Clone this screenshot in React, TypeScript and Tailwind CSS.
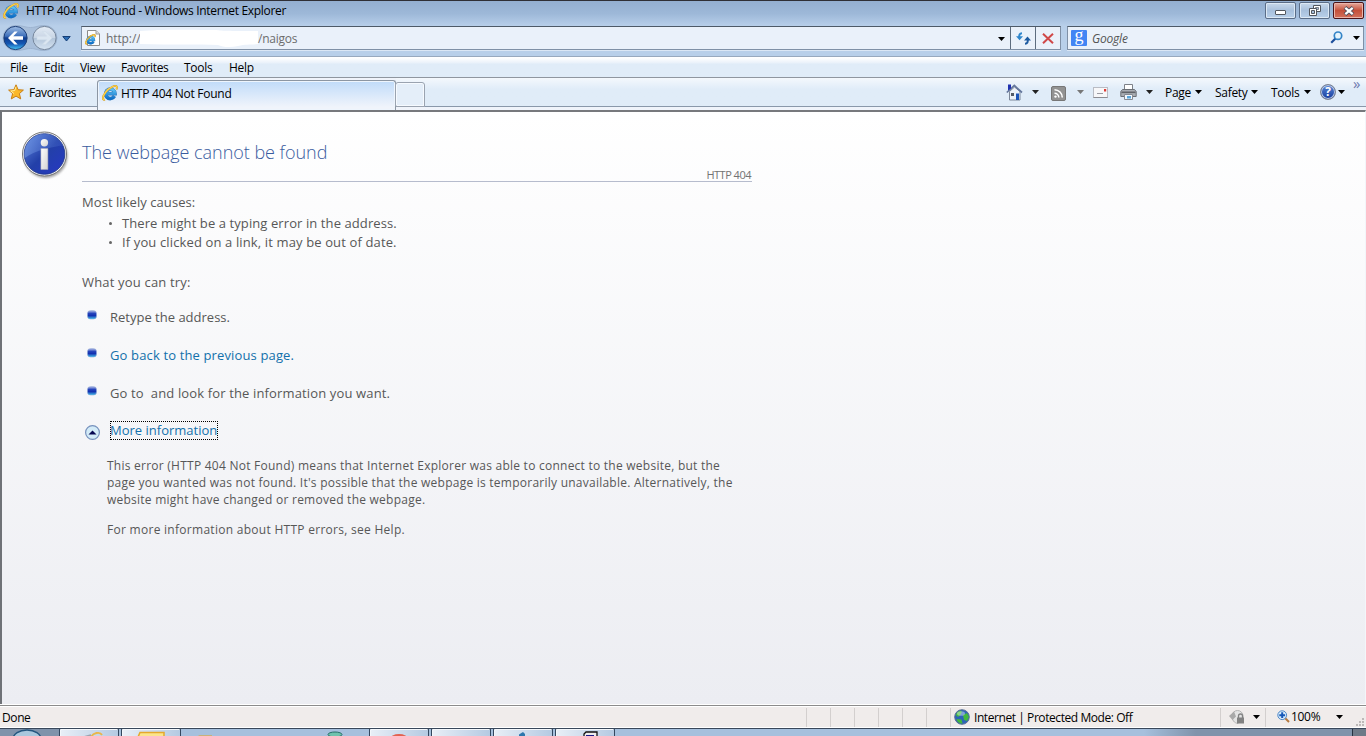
import React from 'react';

const IELogo = ({ size = 16 }: { size?: number }) => (
  <svg width={size} height={size} viewBox="0 0 16 16" className="shrink-0">
    <defs>
      <linearGradient id="ie" x1="0" y1="0" x2="0" y2="1">
        <stop offset="0" stopColor="#5cc3f5" />
        <stop offset="1" stopColor="#0f70c8" />
      </linearGradient>
    </defs>
    <path d="M12.4 11.2A4.700 4.700 0 1 1 13 8.700H5.2" fill="none" stroke="#2b74b6" strokeWidth="3.6" />
    <path d="M12.4 11.2A4.700 4.700 0 1 1 13 8.700H5.2" fill="none" stroke="url(#ie)" strokeWidth="2.8" />
    <path d="M3 14.6C-.2 15.4.6 11 3.8 7 7.2 2.8 13.400-.4 14.700 1.600c.5.9.2 1.800-.3 2.800" fill="none" stroke="#c08a1c" strokeWidth="1.900" />
    <path d="M3 14.6C-.2 15.4.6 11 3.8 7 7.2 2.8 13.400-.4 14.700 1.600c.5.9.2 1.800-.3 2.800" fill="none" stroke="#fbd04a" strokeWidth="1.400" />
  </svg>
);

const Caret = ({ className = '' }: { className?: string }) => (
  <svg width="7" height="4" viewBox="0 0 7 4" className={`shrink-0 ${className}`}>
    <path d="M0 0h7L3.5 4z" fill="currentColor" />
  </svg>
);

const NavButtons = () => (
  <svg width="62" height="28" viewBox="0 0 62 28" className="shrink-0">
    <defs>
      <linearGradient id="back" x1="0" y1="0" x2="0" y2="1">
        <stop offset="0" stopColor="#9fbde4" />
        <stop offset=".42" stopColor="#3e70bb" />
        <stop offset=".5" stopColor="#0f3c8d" />
        <stop offset=".75" stopColor="#1458b4" />
        <stop offset="1" stopColor="#49c6f5" />
      </linearGradient>
      <linearGradient id="fwd" x1="0" y1="0" x2="0" y2="1">
        <stop offset="0" stopColor="#e3ebf5" />
        <stop offset=".48" stopColor="#c9d6e5" />
        <stop offset=".52" stopColor="#b3c5da" />
        <stop offset="1" stopColor="#d7e5f3" />
      </linearGradient>
    </defs>
    <path d="M13.500 1.500c8 0 10 2 15 2s7-2 14-2a12.500 12.500 0 0 1 0 25c-7 0-9-2-14-2s-7 2-15 2a12.500 12.500 0 0 1 0-25z" fill="#a9bfda" stroke="#98afcc" strokeWidth=".8" />
    <circle cx="13.500" cy="14" r="11.600" fill="url(#back)" stroke="#1d3f78" />
    <path d="M6 14l6.500-6.500h3.200l-4.400 4.700H21v3.600h-9.700l4.400 4.700h-3.200z" fill="#fff" />
    <circle cx="42.500" cy="14" r="11.600" fill="url(#fwd)" stroke="#75869c" />
    <path d="M50 14l-6.500-6.500h-3.200l4.400 4.700H35v3.600h9.700l-4.400 4.700h3.200z" fill="#dbe6f1" stroke="#cfdbe8" strokeWidth=".6" />
  </svg>
);

const PageIcon = () => (
  <div className="relative h-4 w-4 shrink-0">
    <svg width="16" height="16" viewBox="0 0 16 16">
      <path d="M2.500.5h8.500l3.500 3.500v11.500h-12z" fill="#fdfdfd" stroke="#8c8c8c" />
      <path d="M11 .5V4h3.500" fill="#ddd" stroke="#9a9a9a" />
    </svg>
    <div className="absolute top-[4px] left-0"><IELogo size={11} /></div>
  </div>
);

const WindowButtons = () => (
  <div className="flex gap-[3px]">
    <div className="flex h-[17px] w-[31px] items-center justify-center rounded-[2px] border border-[#5b6d87] bg-linear-to-b from-[#c8d8ea] via-[#a8c0dc] to-[#b9d0ea] shadow-[inset_0_0_0_1px_#dce8f4]">
      <svg width="11" height="5" viewBox="0 0 11 5" className="mt-[4px]"><rect x=".5" y=".5" width="10" height="4" rx=".5" fill="#fff" stroke="#53575e" /></svg>
    </div>
    <div className="flex h-[17px] w-[31px] items-center justify-center rounded-[2px] border border-[#5b6d87] bg-linear-to-b from-[#c8d8ea] via-[#a8c0dc] to-[#b9d0ea] shadow-[inset_0_0_0_1px_#dce8f4]">
      <svg width="12" height="11" viewBox="0 0 12 11">
        <path d="M4.500.5h7v6h-7z" fill="#fff" stroke="#53575e" />
        <path d="M6.500 2.500h3v2h-3z" fill="#a8c0dc" stroke="#53575e" strokeWidth=".7" />
        <path d="M.5 3.500h7v7h-7z" fill="#fff" stroke="#53575e" />
        <path d="M2.500 5.500h3v3h-3z" fill="#a8c0dc" stroke="#53575e" />
      </svg>
    </div>
    <div className="flex h-[17px] w-[31px] items-center justify-center rounded-[2px] border border-[#4b1318] bg-linear-to-b from-[#e5a79b] via-[#c4503b] to-[#d2705c] shadow-[inset_0_0_0_1px_#e9b5ab]">
      <svg width="12" height="10" viewBox="0 0 12 10">
        <path d="M2 1.500l8 7M10 1.500l-8 7" stroke="#4e4e5c" strokeWidth="4" />
        <path d="M2.300 1.800l7.400 6.400M9.700 1.800L2.300 8.200" stroke="#fff" strokeWidth="2.200" />
      </svg>
    </div>
  </div>
);

const TitleBar = () => (
  <div className="flex h-[26px] items-start justify-between border-t border-[#2f2f35] bg-linear-to-b from-[#94afd0] via-[#9db8d8] to-[#b8cfea] pr-[2px] pl-[3px]">
    <div className="flex h-[20px] items-center gap-[7px]">
      <span className="-mt-px"><IELogo /></span>
      <span className="text-[12px] tracking-[-0.32px] text-black">HTTP 404 Not Found - Windows Internet Explorer</span>
    </div>
    <div className="mt-px"><WindowButtons /></div>
  </div>
);

const AddressBar = () => (
  <div className="flex h-[30px] bg-[#b8cfe9] pl-[2px]">
    <div className="-mt-[2px] flex h-[28px] w-[79px] items-center">
      <NavButtons />
      <svg width="9" height="6" viewBox="0 0 9 6" className="-ml-[2px] mt-[2px]"><path d="M.8.500h7.400L4.500 5z" fill="#2b6cb4" stroke="#163f77" /></svg>
    </div>
    <div className="flex h-[24px] w-[980px] border border-[#7f90a6] border-t-[#4e5a68] bg-[#eaf1fa] shadow-[0_1px_0_#dbe7f5]">
      <div className="flex flex-1 items-center pl-[3px]">
        <PageIcon />
        <span className="mt-[2px] ml-[5px] w-[34px] text-[12px] tracking-[-0.1px] text-[#6d6d6d]">http://</span>
        <svg width="118" height="19" viewBox="0 0 118 19" className="shrink-0">
          <path d="M0 2C20 0 60 1 77 1c3 1 20 1 41 1v13c-8 1-12 0-20 2-8 2-16 1-20-1-20-1-45 0-78-1z" fill="#fff" />
        </svg>
        <span className="mt-[2px] text-[12px] tracking-[-0.25px] text-[#6d6d6d]">/naigos</span>
        <Caret className="mt-px mr-[5px] ml-auto text-black" />
      </div>
      <div className="flex w-[25px] items-center justify-center border-l border-[#5d6c7e]">
        <svg width="15" height="13" viewBox="0 0 15 13">
          <path d="M6 1.200C3.500 1.200 3 3 3.200 6" fill="none" stroke="#2f86cc" strokeWidth="2" />
          <path d="M0 4.200h7L3.500 8.200z" fill="#2f86cc" />
          <path d="M9 11.800c2.500 0 3-1.800 2.800-4.800" fill="none" stroke="#1c5aa0" strokeWidth="2" />
          <path d="M8 8.600h7L11.500 4.500z" fill="#1c5aa0" />
        </svg>
      </div>
      <div className="flex w-[25px] items-center justify-center border-l border-[#5d6c7e]">
        <svg width="12" height="11" viewBox="0 0 12 11" className="mt-px"><path d="M1 .8l10 9.400M11 .8L1 10.200" stroke="#d04848" strokeWidth="2" /></svg>
      </div>
    </div>
    <div className="ml-[6px] flex h-[24px] w-[297px] items-center border border-[#7f90a6] border-t-[#4e5a68] bg-[#eaf1fa] pl-[3px] shadow-[0_1px_0_#dbe7f5]">
      <div className="flex h-4 w-4 items-center justify-center rounded-[1px] bg-[#4285f4]">
        <span className="mt-[-6px] font-['Liberation_Serif',serif] text-[18px] leading-none text-white">g</span>
      </div>
      <span className="mt-[2px] ml-[5px] text-[12px] tracking-[-0.2px] text-[#555] italic">Google</span>
      <svg width="13" height="13" viewBox="0 0 13 13" className="-mt-px ml-auto">
        <path d="M6 7L1.200 11.800" stroke="#1d4f9c" strokeWidth="2.200" />
        <circle cx="8" cy="4.700" r="3.700" fill="#e6f4fd" stroke="#3384c7" strokeWidth="1.700" />
      </svg>
      <Caret className="-mt-px mr-[3px] ml-[10px] text-black" />
    </div>
  </div>
);

const MenuBar = () => (
  <div className="flex h-[22px] items-center border-t border-b border-t-[#98a9be] border-b-[#8f969f] bg-linear-to-b from-white from-5% via-[#e9f1fa] via-30% to-[#e0ecf8] to-35% pt-[2px] pl-[10px] text-[12px] tracking-[-0.3px] text-black">
    <span className="w-[34px]">File</span>
    <span className="w-[36px]">Edit</span>
    <span className="w-[41px]">View</span>
    <span className="w-[63px] tracking-[-0.38px]">Favorites</span>
    <span className="w-[45px]">Tools</span>
    <span>Help</span>
  </div>
);

const HomeIcon = () => (
  <svg width="17" height="17" viewBox="0 0 17 17" className="shrink-0">
    <path d="M3.500 7.500L8.500 3l5.500 4.500v8.500h-10.500z" fill="#eef2f8" stroke="#7c8799" />
    <path d="M.8 8.500L8.300 1.500l7.700 7" fill="none" stroke="#65779c" strokeWidth="1.700" />
    <path d="M2 .5h3v4l-3 2z" fill="#1f31b0" />
    <path d="M5 9h3v3H5z" fill="#555b66" />
    <path d="M10 9.500h3v6.500h-3z" fill="#1d55b8" />
  </svg>
);

const RssIcon = () => (
  <svg width="15" height="15" viewBox="0 0 15 15" className="shrink-0">
    <rect x=".5" y=".5" width="14" height="14" rx="1.500" fill="#929292" stroke="#777" />
    <path d="M3.500 7.200a4.300 4.300 0 0 1 4.300 4.300M3.500 3.700a7.800 7.800 0 0 1 7.800 7.800" fill="none" stroke="#fff" strokeWidth="1.600" />
    <circle cx="4.500" cy="10.600" r="1.200" fill="#fff" />
  </svg>
);

const MailIcon = () => (
  <svg width="15" height="11" viewBox="0 0 15 11" className="shrink-0">
    <rect x=".5" y=".5" width="14" height="10" fill="#f7f7f9" stroke="#b9bcc4" />
    <path d="M11 2h2.200v2.500H11z" fill="#dd3b35" />
    <path d="M4 6.500h6" stroke="#9a9aa2" />
    <path d="M.5 10.500h14" stroke="#8c8c92" />
  </svg>
);

const PrinterIcon = () => (
  <svg width="17" height="16" viewBox="0 0 17 16" className="shrink-0">
    <path d="M4.500.5h8V7h-8z" fill="#fff" stroke="#7d8188" />
    <path d="M2.500 5.500h12l1.700 2v5H.8v-5z" fill="#a9adb3" stroke="#6c7076" />
    <path d="M1.500 7.500h14v1.600h-14z" fill="#606368" />
    <path d="M4.500 10.500h8v5h-8z" fill="#f4f8fc" stroke="#868b93" />
    <path d="M7 12h4v2.500H7z" fill="#5ba8dc" />
  </svg>
);

const HelpIcon = () => (
  <div className="flex h-4 w-4 items-center justify-center rounded-full border border-[#7b8190] bg-linear-to-b from-[#5a86d6] to-[#173a9c] shadow-[inset_0_0_0_1px_#b8c8e4]">
    <span className="text-[12px] leading-none font-bold text-white">?</span>
  </div>
);

const CommandBar = () => (
  <div className="flex h-[28px] items-center text-[12px] tracking-[-0.3px] text-black">
    <HomeIcon />
    <Caret className="ml-[9px] text-[#222]" />
    <span className="mt-[2px] ml-[12px]"><RssIcon /></span>
    <Caret className="ml-[11px] text-[#777]" />
    <span className="ml-[9px]"><MailIcon /></span>
    <span className="ml-[12px]"><PrinterIcon /></span>
    <Caret className="ml-[9px] text-[#222]" />
    <span className="mt-px ml-[12px] w-[30px] whitespace-nowrap">Page</span>
    <Caret />
    <span className="mt-px ml-[13px] w-[36px] whitespace-nowrap">Safety</span>
    <Caret />
    <span className="mt-px ml-[13px] w-[33px] whitespace-nowrap">Tools</span>
    <Caret />
    <span className="ml-[9px]"><HelpIcon /></span>
    <Caret className="ml-[2px]" />
    <span className="mt-[-18px] ml-[8px] w-[13px] text-[15px] text-[#6c79ae]">»</span>
  </div>
);

const TabRow = () => (
  <div className="flex h-[32px] items-start bg-[#f0f4fb]">
    <div className="flex h-[29px] w-[97px] items-center border-b border-[#8a98aa] bg-linear-to-b from-[#f4f8fd] to-[#e0ecf8] to-40% pl-[8px]">
      <svg width="16" height="16" viewBox="0 0 16 16" className="shrink-0">
        <path d="M8 .8l2.100 4.900 5.300.4-4 3.500 1.300 5.300L8 12.100l-4.700 2.800 1.300-5.300-4-3.500 5.300-.4z" fill="#fbb829" stroke="#c87e14" />
        <path d="M8 2.800L6.700 6.500l-4 .5 3.200 2.500" fill="none" stroke="#fff0a0" />
      </svg>
      <span className="mt-px ml-[5px] text-[12px] tracking-[-0.4px] text-black">Favorites</span>
    </div>
    <div className="mt-[2px] flex h-[30px] w-[299px] items-start rounded-t-[3px] border border-b-0 border-[#8c96a3] bg-linear-to-b from-[#c0dbf9] to-[#f0f4fb] to-90% pt-[4px] pl-[4px] shadow-[inset_0_0_0_1px_#eef5fd]">
      <IELogo />
      <span className="ml-[3px] text-[12px] leading-[18px] tracking-[-0.26px] text-black">HTTP 404 Not Found</span>
    </div>
    <div className="flex h-[29px] flex-1 items-start justify-between border-b border-[#8a98aa] bg-linear-to-b from-[#f4f8fd] to-[#e0ecf8] to-40%">
      <div className="-ml-px mt-[4px] h-[25px] w-[30px] rounded-t-[3px] rounded-bl-[2px] border border-[#9aa3b0] bg-[#e4eef9] shadow-[inset_0_0_0_1px_#f6faff]" />
      <CommandBar />
    </div>
  </div>
);

const InfoIcon = () => (
  <svg width="48" height="50" viewBox="0 0 48 50" className="shrink-0">
    <defs>
      <linearGradient id="info" x1="0" y1="0" x2="1" y2="1">
        <stop offset="0" stopColor="#5f88e0" />
        <stop offset=".5" stopColor="#2340a8" />
        <stop offset="1" stopColor="#2638c4" />
      </linearGradient>
      <linearGradient id="gloss" x1="0" y1="0" x2="1" y2="0">
        <stop offset="0" stopColor="#7fa5ea" stopOpacity=".5" />
        <stop offset="1" stopColor="#4b6fd0" stopOpacity=".25" />
      </linearGradient>
      <linearGradient id="stem" x1="0" y1="0" x2="1" y2="1">
        <stop offset="0" stopColor="#fff" />
        <stop offset="1" stopColor="#d2d2d2" />
      </linearGradient>
      <filter id="soft"><feGaussianBlur stdDeviation="1.2" /></filter>
    </defs>
    <circle cx="23.600" cy="25" r="22" fill="#777" opacity=".65" filter="url(#soft)" />
    <circle cx="22.500" cy="23" r="22" fill="#f4f4f4" stroke="#777" />
    <circle cx="22.500" cy="23" r="20.300" fill="url(#info)" stroke="#1c3285" strokeWidth=".8" />
    <path d="M2.400 23.200A20.300 20.300 0 0 1 41 14.200C30 16 13 19 2.400 27.200z" fill="url(#gloss)" />
    <circle cx="22.400" cy="11.700" r="3.700" fill="url(#stem)" />
    <path d="M18.900 17.500h7v21h-7z" fill="url(#stem)" stroke="#aab" strokeWidth=".5" />
  </svg>
);

const Bullet = () => (
  <svg width="10" height="10" viewBox="0 0 10 10" className="shrink-0">
    <defs>
      <linearGradient id="dot" x1="0" y1="0" x2="0" y2="1">
        <stop offset="0" stopColor="#b5c0e8" />
        <stop offset=".35" stopColor="#2442bb" />
        <stop offset=".6" stopColor="#1230b0" />
        <stop offset="1" stopColor="#48c5ee" />
      </linearGradient>
    </defs>
    <rect x=".5" y=".5" width="9" height="8.600" rx="3.200" fill="url(#dot)" stroke="#8ea6d4" strokeWidth=".5" />
  </svg>
);

const suggestions = [
  { text: 'Retype the address.', className: 'text-[#575757]' },
  { text: 'Go back to the previous page.', className: 'text-[#1370ab] tracking-[0.14px]' },
  { text: 'Go to\u00a0 and look for the information you want.', className: 'text-[#575757] tracking-[0.14px]' },
];

const ErrorPage = () => (
  <div className="h-[594px] border-t-2 border-r border-l-2 border-[#6f7277] border-t-[#77797d] border-r-[#f3f6fa] bg-linear-to-b from-white to-[#ecedf2] text-[13px] text-[#575757]">
    <div className="flex pt-[19px] pl-[20px]">
      <InfoIcon />
      <div className="ml-[12px] w-[670px]">
        <h1 className="mt-[8px] h-[27px] text-[18px] leading-[26px] font-light tracking-[-0.03px] text-[#3a5c9e]">The webpage cannot be found</h1>
        <div className="h-[16px] border-b border-[#b6bccd] pr-px text-right text-[11px] leading-[17px] tracking-[-0.5px] text-[#737373]">HTTP 404</div>
        <p className="mt-[10px] leading-5 tracking-[0.06px]">Most likely causes:</p>
        <ul className="mt-[2px] pl-[27px] leading-[19px]">
          <li className="flex items-center gap-[10px] tracking-[0.09px]"><span className="size-[3px] rounded-full bg-[#666]" />There might be a typing error in the address.</li>
          <li className="flex items-center gap-[10px] tracking-[0.13px]"><span className="size-[3px] rounded-full bg-[#666]" />If you clicked on a link, it may be out of date.</li>
        </ul>
        <p className="mt-[20px] leading-5 tracking-[0.18px]">What you can try:</p>
        <div className="mt-[15px] pl-[5px]">
          {suggestions.map(s => (
            <div key={s.text} className="flex h-[38px] items-start gap-[13px]">
              <span className="mt-[3px]"><Bullet /></span>
              <span className={`leading-5 ${s.className}`}>{s.text}</span>
            </div>
          ))}
        </div>
        <div className="flex h-[20px] items-center pl-[2px]">
          <svg width="17" height="17" viewBox="0 0 17 17" className="mt-[2px]">
            <circle cx="8.500" cy="8.500" r="6.900" fill="#d3ebf8" stroke="#7791bd" strokeWidth="1.200" />
            <path d="M4.500 10.500L8.500 6.500l4 4z" fill="#060650" />
          </svg>
          <span className="-mt-px ml-[9px] h-[19px] w-[108px] border border-dotted border-black leading-[17px] whitespace-nowrap text-[#1370ab]"><span className="-ml-px">More information</span></span>
        </div>
        <div className="mt-[16px] pl-[25px] text-[12px] leading-[17px] tracking-[0.245px]">
          <p>This error (HTTP 404 Not Found) means that Internet Explorer was able to connect to the website, but the<br />page you wanted was not found. It's possible that the webpage is temporarily unavailable. Alternatively, the<br />website might have changed or removed the webpage.</p>
          <p className="mt-[13px] tracking-[0.28px]">For more information about HTTP errors, see Help.</p>
        </div>
      </div>
    </div>
  </div>
);

const Globe = () => (
  <svg width="16" height="16" viewBox="0 0 16 16" className="shrink-0">
    <circle cx="8" cy="8" r="7.300" fill="#2c64b8" stroke="#5b7094" />
    <path d="M1.800 6c1-3 4-4.800 6-4L7 5 4 8zM9 6l4-2 2 4-2 4-3-1zM2.500 10l5 .5 1 4c-3 .3-5.500-1.500-6-4.500z" fill="#42b83e" />
    <ellipse cx="7" cy="4.500" rx="4" ry="2.300" fill="#fff" opacity=".4" />
  </svg>
);

const StatusBar = () => (
  <div className="mt-px flex h-[23px] items-center border-t border-[#8b8b8b] bg-[#f0eceb] text-[12px] tracking-[-0.3px] text-black shadow-[inset_0_1px_0_#fff,inset_0_-1px_0_#fff]">
    <span className="mt-[2px] w-[806px] pl-[2px] tracking-[-0.4px]">Done</span>
    {[0, 1, 2, 3, 4, 5].map(i => <div key={i} className="h-[19px] w-[24px] border-l border-[#d3cfce]" />)}
    <div className="flex h-[19px] w-[270px] items-center border-l border-[#d3cfce] pl-[3px]">
      <Globe />
      <span className="mt-[2px] ml-[4px] tracking-[-0.43px]">Internet | Protected Mode: Off</span>
    </div>
    <div className="flex h-[19px] w-[45px] items-center border-l border-[#d3cfce] pl-[8px]">
      <svg width="16" height="14" viewBox="0 0 16 14">
        <path d="M3 6a5.500 5.500 0 0 1 11 0v2L9 13.500C5 13 3 10 3 6z" fill="#e4e4e4" stroke="#b4b4b4" />
        <path d="M0 6l5-4.500 2 5-3.500 3.500z" fill="#a9a9a9" />
        <rect x="8" y="7.500" width="7" height="6" fill="#828282" />
        <path d="M9.500 8V6a2 2 0 0 1 4 0v2" fill="none" stroke="#828282" strokeWidth="1.300" />
      </svg>
      <Caret className="ml-[8px]" />
    </div>
    <div className="flex h-[19px] flex-1 items-center border-l border-[#d3cfce] pl-[11px]">
      <svg width="13" height="13" viewBox="0 0 13 13" className="-mt-px shrink-0">
        <path d="M8 8l4 4" stroke="#b5793f" strokeWidth="2" />
        <circle cx="5.200" cy="5.200" r="4.400" fill="#d9ecfb" stroke="#4d86c6" />
        <path d="M5.200 2.300v5.800M2.300 5.200h5.800" stroke="#1658b8" strokeWidth="2" />
      </svg>
      <span className="ml-px w-[45px]">100%</span>
      <Caret />
      <svg width="8" height="8" viewBox="0 0 8 8" className="mt-[10px] ml-[13px]">
        <path d="M6 0h2v2H6zM3 3h2v2H3zM6 3h2v2H6zM0 6h2v2H0zM3 6h2v2H3zM6 6h2v2H6z" fill="#bdb9b8" />
      </svg>
    </div>
  </div>
);

const taskClass = 'flex h-[8px] justify-center overflow-hidden rounded-t-[2px] border border-b-0 border-[#33475f] bg-linear-to-r from-[#e9eff7] to-[#b5cae2] shadow-[inset_1px_1px_0_#f3f7fb]';

const TaskBar = () => (
  <div className="flex h-[8px] overflow-hidden border-t border-[#39475a] bg-linear-to-r from-[#8093ab] from-0% via-[#a6c0dd] via-7% to-[#a6c0dd]">
    <div className="flex w-[59px] justify-center bg-[#8093ab]">
      <svg width="30" height="8" viewBox="0 0 30 8" className="ml-[-5px]"><ellipse cx="15" cy="10" rx="14" ry="9" fill="#a9c7dd" stroke="#24567f" strokeWidth="1.500" /></svg>
    </div>
    <div className={`-mt-px w-[60px] ${taskClass}`}>
      <svg width="30" height="8" viewBox="0 0 30 8" className="ml-[12px]"><path d="M4 8l7-2" stroke="#9aa4b0" strokeWidth="1.800" /><path d="M11 8c2-4 9-6 11-2" fill="none" stroke="#e9b64a" strokeWidth="1.800" /></svg>
    </div>
    <div className={`-mt-px ml-[2px] w-[60px] ${taskClass}`}>
      <svg width="28" height="8" viewBox="0 0 28 8"><path d="M1 8l2-4.500h24V8z" fill="#fbe58c" stroke="#e5a92c" strokeWidth="1.500" /></svg>
    </div>
    <svg width="188" height="8" viewBox="0 0 188 8" className="shrink-0">
      <path d="M17 8q0-2 2-2h12v2z" fill="#c8b27a" />
      <ellipse cx="154" cy="5.500" rx="7" ry="2.500" fill="#6fc2ad" stroke="#276f68" />
    </svg>
    <div className={`-mt-px w-[60px] ${taskClass}`}>
      <svg width="20" height="8" viewBox="0 0 20 8"><ellipse cx="10" cy="10" rx="9" ry="5" fill="#e26250" /></svg>
    </div>
    <div className={`-mt-px ml-[2px] w-[60px] ${taskClass}`} />
    <div className={`-mt-px ml-[2px] w-[60px] ${taskClass}`}>
      <svg width="12" height="8" viewBox="0 0 12 8"><path d="M2 8V5.500L6 3l2 2v3z" fill="#2d77ad" /></svg>
    </div>
    <div className={`-mt-px ml-[2px] w-[60px] ${taskClass}`}>
      <svg width="16" height="8" viewBox="0 0 16 8" className="ml-[10px]"><path d="M2 8V5l2-2h11v5" fill="#ececec" stroke="#111" strokeWidth="1.300" /><path d="M4 6h8v2H4z" fill="#1a1a8c" /></svg>
    </div>
    <div className="ml-auto w-[208px] bg-linear-to-r from-[#a6c0dd] to-[#8093ab] to-25%" />
    <div className="w-[14px] border-l border-[#263240] bg-[#6e7987]" />
  </div>
);

export default function App() {
  return (
    <div className="flex h-[736px] w-[1366px] flex-col overflow-hidden bg-white font-['Open_Sans','Noto_Sans',sans-serif]">
      <TitleBar />
      <AddressBar />
      <MenuBar />
      <TabRow />
      <ErrorPage />
      <StatusBar />
      <TaskBar />
    </div>
  );
}
